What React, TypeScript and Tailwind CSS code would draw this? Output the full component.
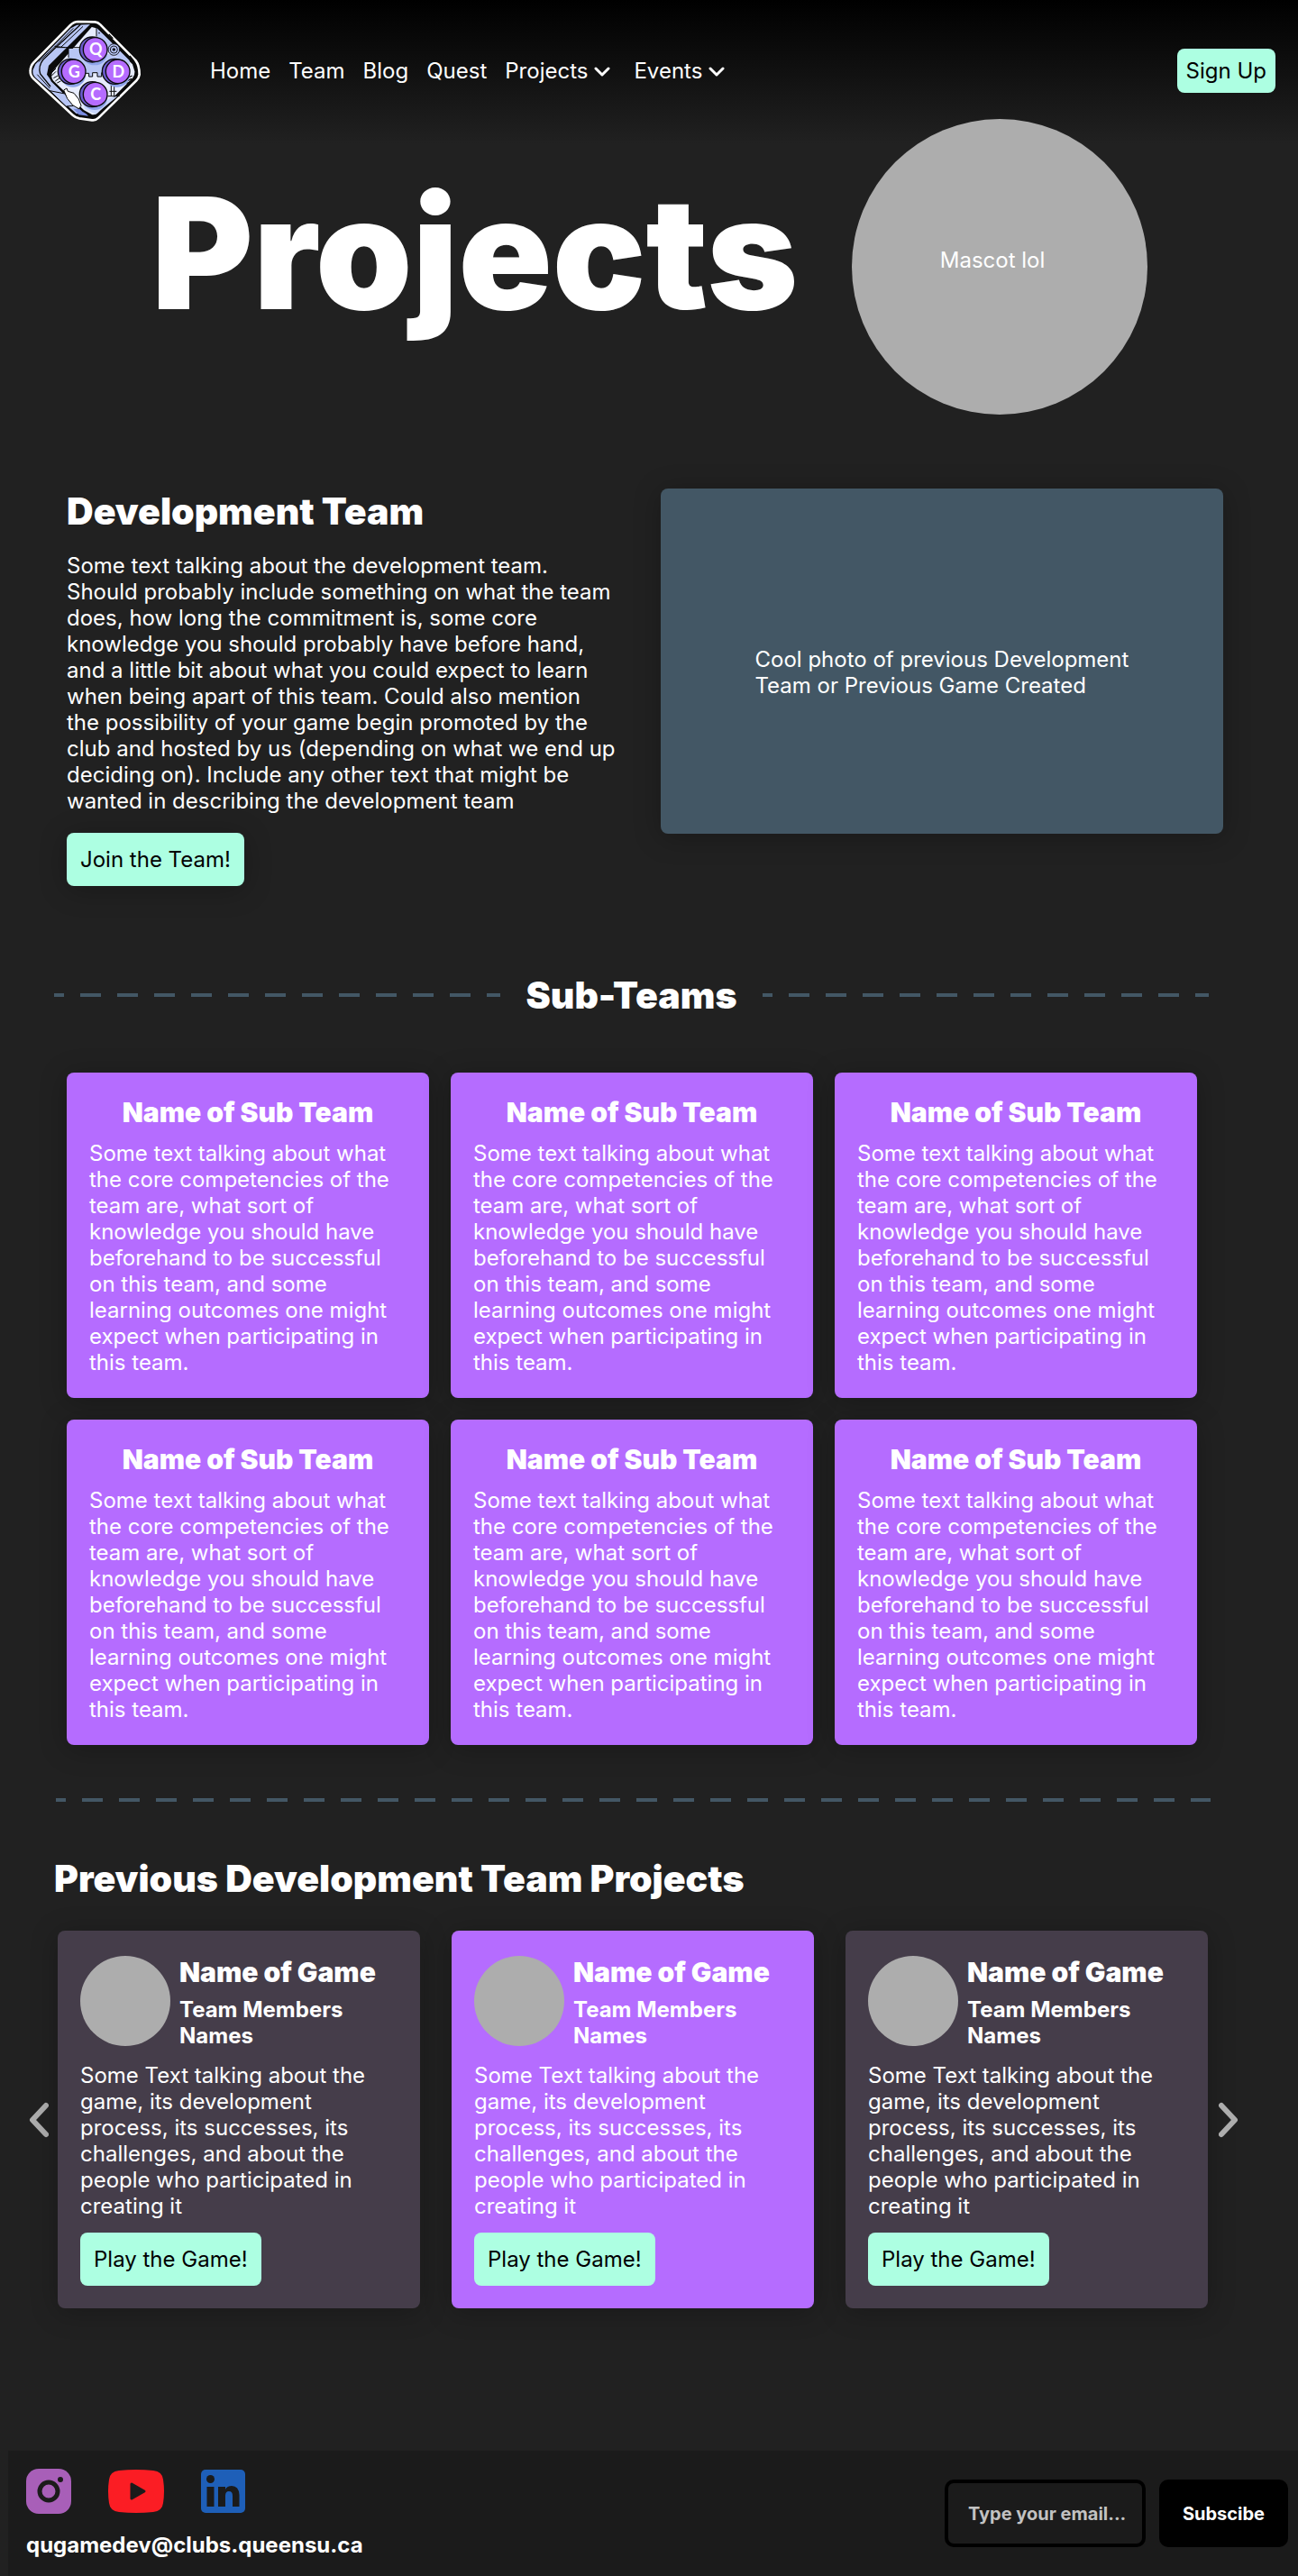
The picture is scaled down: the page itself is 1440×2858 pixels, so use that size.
import React from "react";

const display = "font-['Inter',sans-serif] font-black";
const sectionTitle = "text-[41px] leading-[50px]";
const cardShadow = "shadow-[0_4px_30px_rgba(0,0,0,0.25)]";
const mint = "bg-[#adffe2] text-black rounded-lg";

const subTeamText =
  "Some text talking about what the core competencies of the team are, what sort of knowledge you should have beforehand to be successful on this team, and some learning outcomes one might expect when participating in this team.";

const gameText =
  "Some Text talking about the game, its development process, its successes, its challenges, and about the people who participated in creating it";

const logoButtons = [
  { x: 239, y: 117, letter: "Q" },
  { x: 167, y: 190, letter: "G" },
  { x: 314, y: 190, letter: "D" },
  { x: 239, y: 266, letter: "C" },
];

function Logo() {
  return (
    <svg viewBox="0 0 408 372" className="h-[124px] w-[136px] shrink-0" role="img" aria-label="QGDC">
      <path
        d="M182 24 L238 25 Q248 26 256 34 L374 154 Q386 170 386 200 Q384 212 376 220 L250 344 Q240 354 228 352 L186 346 Q174 344 164 335 L32 212 Q22 202 23 188 Q23 172 34 160 L156 36 Q168 24 182 24 Z"
        fill="#0a0a0a"
        stroke="#ffffff"
        strokeWidth="8"
        strokeLinejoin="round"
      />
      <path d="M178 35 L222 33 L84 170 L78 200 L92 220 L196 330 L176 330 L42 212 Q30 202 31 186 L40 166 L158 46 Z" fill="#b8c6f5" />
      <path d="M190 34 L112 106 L66 150 Q48 172 56 198 L90 240" fill="none" stroke="#0a0a0a" strokeWidth="4" />
      <path d="M166 46 L106 106 L50 158 M198 40 L126 108 M46 200 L88 246" fill="none" stroke="#0a0a0a" strokeWidth="3" />
      <path d="M104 106 L138 110 M128 92 L140 80 M118 102 L130 88" stroke="#0a0a0a" strokeWidth="3" />
      <path d="M166 314 L196 316 L216 338 L184 334 Z" fill="#7b8ce0" />
      <path
        d="M226 38 L246 43 L366 164 L374 190 Q374 206 366 214 L250 330 Q240 340 226 336 L200 322 L96 222 Q84 204 96 186 Z"
        fill="#e7ecfd"
        stroke="#0a0a0a"
        strokeWidth="7"
        strokeLinejoin="round"
      />
      <path d="M243 45 L268 68 L352 152 L356 170 L312 142 L278 120 L244 76 Z" fill="#b8c6f5" />
      <path d="M150 114 H196 L252 158 L278 130 L350 156 L310 196 H260 V208 H245 V194 H231 V208 H216 V196 H186 L150 150 Z" fill="#b8c6f5" />
      <path d="M243 42 V74 M110 110 H196 M150 112 V144 M202 196 H218 V207 H230 V194 H246 V207 H260 V194 H280" fill="none" stroke="#0a0a0a" strokeWidth="3" />
      <path d="M192 280 Q238 326 286 280 L316 270 L240 332 L204 314 Z" fill="#c9d6fa" />
      <path d="M292 234 V272 M302 234 V272 M286 256 H310 M280 272 H320" stroke="#0a0a0a" strokeWidth="3" />
      <path d="M84 194 L100 178 M88 200 L108 180 M94 204 L108 190 M100 212 L114 204 M106 222 L120 212 M112 228 L124 222" stroke="#0a0a0a" strokeWidth="3" />
      <path d="M136 122 h4 M136 132 h4 M142 122 v3 M250 62 h4 M344 212 l18 -8 M344 222 l16 -8 M344 230 l12 -6" stroke="#0a0a0a" strokeWidth="4" />
      <g fill="none" stroke="#171923" strokeWidth="3">
        <circle cx="301" cy="117" r="19" fill="#b8c6f5" />
        <circle cx="301" cy="117" r="12" />
        <circle cx="301" cy="117" r="4" fill="#171923" />
      </g>
      <path d="M88 254 L138 264 L166 304 L142 306 Z" fill="#b8c6f5" stroke="#0a0a0a" strokeWidth="3" />
      <path d="M134 252 L144 246 L148 256 L168 262 L184 282 L192 304 L184 314 L164 302 L146 280 Z" fill="#ffffff" stroke="#0a0a0a" strokeWidth="3" />
      {logoButtons.map((b) => (
        <g key={b.letter}>
          <ellipse cx={b.x - 2} cy={b.y + 12} rx="42" ry="40" fill="#8fa4ea" />
          <circle cx={b.x - 10} cy={b.y} r="42" fill="#6a5ccc" stroke="#0a0a0a" strokeWidth="4" />
          <circle cx={b.x} cy={b.y} r="40" fill="#b56cff" stroke="#0a0a0a" strokeWidth="4" />
          <text
            x={b.x + 2}
            y={b.y + 19}
            textAnchor="middle"
            fill="#ffffff"
            fontFamily="Lato, sans-serif"
            fontWeight="700"
            fontSize="54"
          >
            {b.letter}
          </text>
        </g>
      ))}
      <path d="M284 66 l14 14 M354 138 l14 18" stroke="#0a0a0a" strokeWidth="4" />
    </svg>
  );
}

function Caret() {
  return (
    <svg viewBox="0 0 18 12" className="mt-1 h-3 w-[18px]" fill="none" stroke="currentColor" strokeWidth="3" strokeLinecap="round" strokeLinejoin="round">
      <path d="M2 2 L9 9 L16 2" />
    </svg>
  );
}

function Arrow({ d }: { d: string }) {
  return (
    <svg viewBox="0 0 22 40" className="h-10 w-[22px]" fill="none" stroke="#adadad" strokeWidth="6" strokeLinecap="round" strokeLinejoin="round">
      <path d={d} />
    </svg>
  );
}

function Dashes() {
  return (
    <svg className="h-1 w-full min-w-0 flex-1" aria-hidden="true">
      <line x1="-12" y1="2" x2="100%" y2="2" stroke="#435765" strokeWidth="4" strokeDasharray="23 18" />
    </svg>
  );
}

function Header() {
  return (
    <header className="flex items-center pt-4 pr-[25px] pl-[26px]">
      <Logo />
      <nav className="ml-[71px] flex flex-1 items-center gap-5">
        <a href="#home">Home</a>
        <a href="#team">Team</a>
        <a href="#blog">Blog</a>
        <a href="#quest">Quest</a>
        <button type="button" className="flex items-center gap-[7px] pr-[6px]">
          Projects
          <Caret />
        </button>
        <button type="button" className="flex items-center gap-[7px]">
          Events
          <Caret />
        </button>
      </nav>
      <button type="button" className={`${mint} px-[10px] py-[10px]`}>
        Sign Up
      </button>
    </header>
  );
}

function SubTeamCard() {
  return (
    <article className={`rounded-lg bg-[#b56cff] p-[25px] ${cardShadow}`}>
      <h3 className={`${display} mb-[11px] text-center text-[30px] leading-[39px] whitespace-nowrap`}>Name of Sub Team</h3>
      <p>{subTeamText}</p>
    </article>
  );
}

function GameCard({ active }: { active: boolean }) {
  return (
    <article className={`rounded-lg px-[25px] pt-7 pb-[25px] ${active ? "bg-[#b56cff]" : "bg-[#453d4a]"} ${cardShadow}`}>
      <div className="flex gap-[10px]">
        <div className="size-[100px] shrink-0 rounded-full bg-[#adadad]" />
        <div>
          <h3 className={`${display} mb-[9px] text-[30px] leading-9 whitespace-nowrap`}>Name of Game</h3>
          <p className="font-bold">Team Members Names</p>
        </div>
      </div>
      <p className="mt-[15px]">{gameText}</p>
      <button type="button" className={`${mint} mt-[15px] p-[15px]`}>
        Play the Game!
      </button>
    </article>
  );
}

function Footer() {
  return (
    <footer className="mt-[158px] ml-[9px] flex items-start justify-between bg-[#1b1b1b] pt-5 pr-[11px] pb-5 pl-5">
      <div>
        <div className="flex items-center">
          <a href="#instagram" aria-label="Instagram">
            <svg viewBox="0 0 50 50" className="size-[50px]">
              <rect width="50" height="50" rx="14" fill="#a85fb8" />
              <circle cx="25" cy="25" r="10" fill="none" stroke="#1b1b1b" strokeWidth="5" />
              <circle cx="38" cy="12" r="3" fill="#1b1b1b" />
            </svg>
          </a>
          <a href="#youtube" aria-label="YouTube" className="ml-[41px]">
            <svg viewBox="0 0 62 48" className="h-12 w-[62px]">
              <path d="M12 1 Q31 -1 50 1 Q60 2 61 11 Q63 24 61 37 Q60 46 50 47 Q31 49 12 47 Q2 46 1 37 Q-1 24 1 11 Q2 2 12 1 Z" fill="#fb1d24" />
              <path d="M26 16 L40 24 L26 32 Z" fill="#1b1b1b" stroke="#1b1b1b" strokeWidth="3" strokeLinejoin="round" />
            </svg>
          </a>
          <a href="#linkedin" aria-label="LinkedIn" className="ml-[41px]">
            <svg viewBox="0 0 98 96" className="h-12 w-[49px]">
              <rect width="98" height="96" rx="10" fill="#1e5fb8" />
              <g fill="#1b1b1b">
                <circle cx="21" cy="21" r="9" />
                <path d="M13 38 H29 V82 H13 Z M38 38 H54 V44 Q58 36 68 36 Q84 36 85 56 V82 H70 V58 Q70 48 62 48 Q54 48 54 58 V82 H38 Z" />
              </g>
            </svg>
          </a>
        </div>
        <a href="mailto:qugamedev@clubs.queensu.ca" className="mt-5 block font-bold">
          qugamedev@clubs.queensu.ca
        </a>
      </div>
      <form className="mt-3 flex gap-[15px] text-[20px] leading-6 font-bold" onSubmit={(e) => e.preventDefault()}>
        <input
          type="email"
          aria-label="Email address"
          placeholder="Type your email..."
          className="h-[75px] w-[223px] rounded-[10px] border-4 border-black bg-transparent pr-3 pl-[22px] placeholder:text-[#c2c2c2]"
        />
        <button type="submit" className="h-[75px] rounded-[10px] bg-black px-[26px]">
          Subscibe
        </button>
      </form>
    </footer>
  );
}

export default function App() {
  return (
    <div className="min-h-screen bg-[#212121] bg-[linear-gradient(to_bottom,#000000_0px,#212121_160px)] font-['Inter',sans-serif] text-[24px] leading-[29px] font-normal text-white [font-optical-sizing:none]">
      <Header />
      <main>
        <section className="-mt-2 flex items-center justify-between pr-[167px] pl-[168px]">
          <h1 className={`${display} -mt-8 text-[172px] leading-[198px]`}>Projects</h1>
          <div className="flex size-[328px] shrink-0 items-center justify-center rounded-full bg-[#adadad] pr-4 pb-4">
            Mascot lol
          </div>
        </section>

        <section className="mt-[82px] flex items-start justify-between pr-[83px] pl-[74px]">
          <div className="w-[611px]">
            <h2 className={`${display} ${sectionTitle}`}>Development Team</h2>
            <p className="mt-[21px]">
              Some text talking about the development team. Should probably include something on what the team does, how long the
              commitment is, some core knowledge you should probably have before hand, and a little bit about what you could expect to
              learn when being apart of this team. Could also mention the possibility of your game begin promoted by the club and
              hosted by us (depending on what we end up deciding on). Include any other text that might be wanted in describing the
              development team
            </p>
            <button type="button" className={`${mint} ${cardShadow} mt-[21px] p-[15px]`}>
              Join the Team!
            </button>
          </div>
          <div className={`flex h-[383px] w-[624px] items-center justify-center rounded-lg bg-[#435765] pt-6 ${cardShadow}`}>
            <p className="w-[415px]">Cool photo of previous Development Team or Previous Game Created</p>
          </div>
        </section>

        <section className="mt-24">
          <div className="flex items-center gap-7 pr-[99px] pl-[60px]">
            <Dashes />
            <h2 className={`${display} ${sectionTitle}`}>Sub-Teams</h2>
            <Dashes />
          </div>
          <div className="mt-[61px] grid grid-cols-3 gap-6 pr-[112px] pl-[74px]">
            {[1, 2, 3, 4, 5, 6].map((n) => (
              <SubTeamCard key={n} />
            ))}
          </div>
        </section>

        <section className="mt-[59px]">
          <div className="flex pr-[97px] pl-[62px]">
            <Dashes />
          </div>
          <h2 className={`${display} ${sectionTitle} mt-[60px] pl-[60px]`}>Previous Development Team Projects</h2>
          <div className="mt-[33px] flex items-center pr-[66px] pl-8">
            <button type="button" aria-label="Previous projects">
              <Arrow d="M19 4 L4 20 L19 36" />
            </button>
            <div className="mr-3 ml-[10px] grid flex-1 grid-cols-3 gap-[35px]">
              <GameCard active={false} />
              <GameCard active />
              <GameCard active={false} />
            </div>
            <button type="button" aria-label="Next projects">
              <Arrow d="M3 4 L18 20 L3 36" />
            </button>
          </div>
        </section>
      </main>
      <Footer />
    </div>
  );
}
